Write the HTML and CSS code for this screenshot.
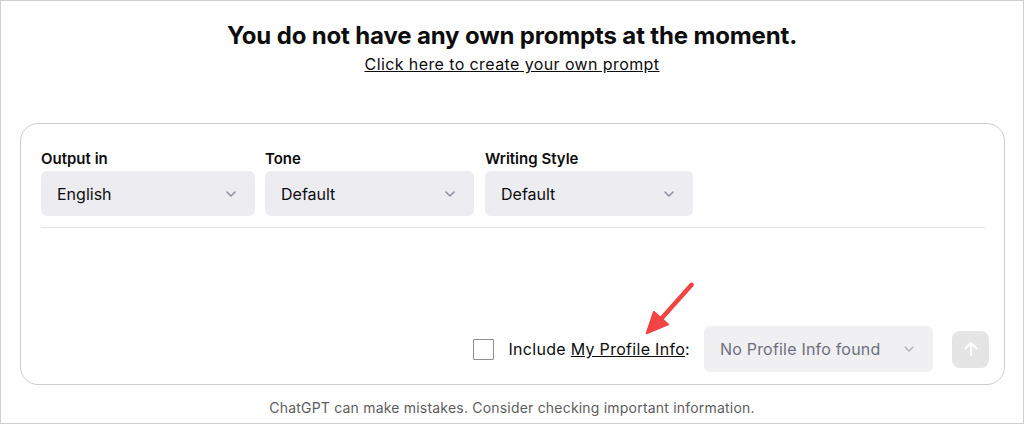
FILE: index.html
```html
<!DOCTYPE html>
<html>
<head>
<meta charset="utf-8">
<link rel="stylesheet" href="styles.css">
</head>
<body>
<div class="frame">
  <div class="empty">
    <h1 class="title">You do not have any own prompts at the moment.</h1>
    <a class="create-link" href="#">Click here to create your own prompt</a>
  </div>
  <div class="card">
    <div class="options">
      <div class="field field-lang">
        <div class="label">Output in</div>
        <div class="select"><span>English</span><svg class="chev" viewBox="0 0 16 16"><path d="M4 6l4 4 4-4"/></svg></div>
      </div>
      <div class="field field-tone">
        <div class="label">Tone</div>
        <div class="select"><span>Default</span><svg class="chev" viewBox="0 0 16 16"><path d="M4 6l4 4 4-4"/></svg></div>
      </div>
      <div class="field field-style">
        <div class="label">Writing Style</div>
        <div class="select"><span>Default</span><svg class="chev" viewBox="0 0 16 16"><path d="M4 6l4 4 4-4"/></svg></div>
      </div>
    </div>
    <div class="divider"></div>
    <div class="bottom">
      <div class="include">
        <span class="checkbox"></span>
        <span class="include-text">Include <a href="#">My Profile Info</a>:</span>
        <svg class="annot" viewBox="0 0 60 64"><path d="M54 4 L20 42" /><polygon points="4,58 12,34 28,48"/></svg>
      </div>
      <div class="select select-profile"><span>No Profile Info found</span><svg class="chev" viewBox="0 0 16 16"><path d="M4 6l4 4 4-4"/></svg></div>
      <button class="send"><svg viewBox="0 0 20 20"><path d="M10 16V4M4.5 9.5L10 4l5.5 5.5"/></svg></button>
    </div>
  </div>
  <p class="disclaimer">ChatGPT can make mistakes. Consider checking important information.</p>
</div>
</body>
</html>
```
FILE: styles.css
```css
html, body {
  margin: 0;
  padding: 0;
  background: #fff;
}
body {
  font-family: Inter, "Noto Sans", sans-serif;
  color: #0d0d0d;
}
.frame {
  box-sizing: border-box;
  width: 1024px;
  height: 424px;
  border: 1px solid #cfcfcf;
  display: flex;
  flex-direction: column;
}
.empty {
  display: flex;
  flex-direction: column;
  align-items: center;
  padding-top: 19px;
}
.title {
  margin: 0;
  font-size: 24px;
  line-height: 32px;
  font-weight: 700;
  letter-spacing: -0.15px;
}
.create-link {
  margin-top: 2px;
  font-size: 16px;
  line-height: 20px;
  color: #0d0d0d;
  text-decoration: underline;
  letter-spacing: 0.4px;
}
.card {
  margin: 49px 18px 0 19px;
  border: 1px solid #cdcdcd;
  border-radius: 18px;
  padding: 25px 15px 12px 20px;
  height: 262px;
  box-sizing: border-box;
  display: flex;
  flex-direction: column;
}
.options {
  display: flex;
  gap: 10px;
}
.field-lang { width: 214px; }
.field-tone { width: 209px; }
.field-style { width: 208px; margin-left: 1px; }
.label {
  font-size: 15px;
  font-weight: 600;
  line-height: 20px;
  margin-bottom: 2px;
}
.select {
  height: 45px;
  background: #ececf1;
  border-radius: 6px;
  display: flex;
  align-items: center;
  justify-content: space-between;
  padding: 0 16px 0 16px;
  font-size: 16px;
  color: #0d0d0d;
  box-sizing: border-box;
}
.chev {
  width: 16px;
  height: 16px;
  fill: none;
  stroke: #8e8ea0;
  stroke-width: 1.5;
  stroke-linecap: round;
  stroke-linejoin: round;
}
.divider {
  height: 1px;
  background: #e3e3e3;
  margin: 11px 4px 0 0;
}
.bottom {
  margin-top: auto;
  display: flex;
  align-items: center;
  justify-content: flex-end;
}
.include {
  position: relative;
  display: flex;
  align-items: center;
  font-size: 16px;
  color: #0d0d0d;
  letter-spacing: 0.3px;
}
.checkbox {
  width: 19px;
  height: 19px;
  border: 1px solid #8e8e99;
  border-radius: 1px;
  margin-right: 14px;
}
.include-text a {
  color: #0d0d0d;
  text-decoration: underline;
}
.annot {
  position: absolute;
  left: 170px;
  top: -58px;
  width: 54px;
  height: 58px;
  overflow: visible;
}
.annot path {
  stroke: #f24444;
  stroke-width: 5;
  stroke-linecap: round;
  fill: none;
}
.annot polygon {
  fill: #f24444;
  stroke: #f24444;
  stroke-width: 2;
  stroke-linejoin: round;
}
.select-profile {
  width: 229px;
  height: 46px;
  margin-left: 14px;
  color: #6e6e80;
  background: #f0f0f2;
  letter-spacing: 0.2px;
}
.select-profile .chev { stroke: #b4b4bd; }
.send {
  width: 37px;
  height: 37px;
  margin-left: 19px;
  border: none;
  border-radius: 8px;
  background: #e5e5e5;
  display: flex;
  align-items: center;
  justify-content: center;
  padding: 0;
}
.send svg {
  width: 20px;
  height: 20px;
  fill: none;
  stroke: #fff;
  stroke-width: 2;
  stroke-linecap: round;
  stroke-linejoin: round;
}
.disclaimer {
  margin: 0;
  text-align: center;
  font-size: 14px;
  line-height: 20px;
  color: #5d5d5d;
  padding-top: 13px;
  letter-spacing: 0.2px;
}
```
